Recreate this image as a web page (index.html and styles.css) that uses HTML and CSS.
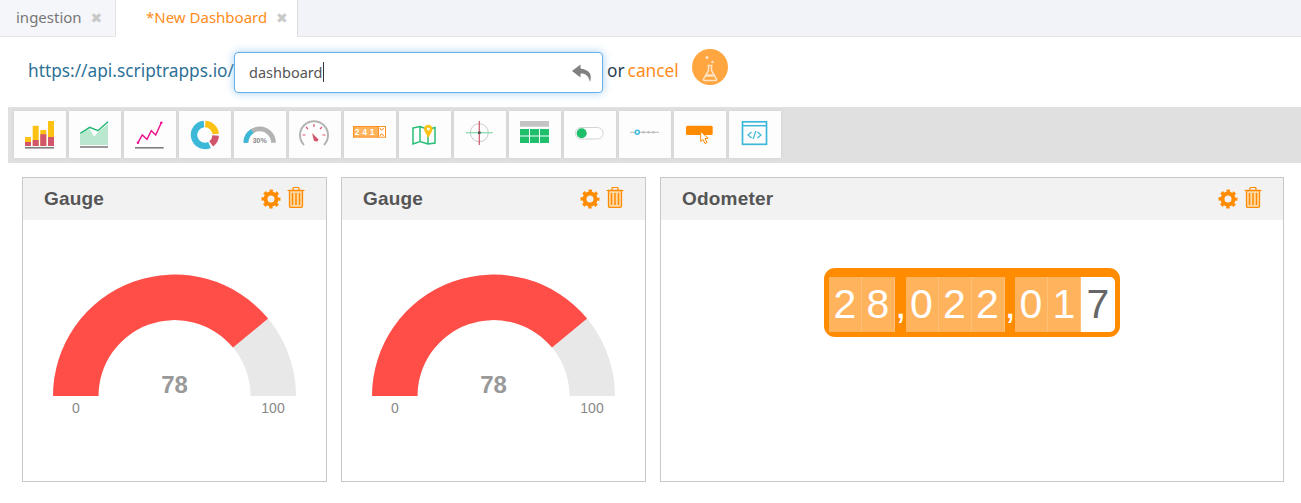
FILE: index.html
```html
<!DOCTYPE html>
<html lang="en">

<head>
  <meta charset="UTF-8">
  <title>New Dashboard</title>
  <link rel="stylesheet" href="styles.css">
</head>

<body>

  <!-- shared card icons -->
  <svg class="sprite">
    <symbol id="cog" viewBox="0 0 20 20">
      <circle cx="10" cy="10" r="5.5" fill="none" stroke="#ff8c00" stroke-width="4" />
      <circle cx="10" cy="10" r="8" fill="none" stroke="#ff8c00" stroke-width="3" stroke-dasharray="3.3 2.98" stroke-dashoffset="1.65" />
    </symbol>
    <symbol id="trash" viewBox="0 0 18 21">
      <path d="M0.5 3.5h17M6 3V1.5q0-1 1-1h4q1 0 1 1V3" fill="none" stroke="#ff8c00" stroke-width="1.2" />
      <path d="M2.5 3.5h13v15.5q0 1.3-1.3 1.3H3.800q-1.300 0-1.300-1.300z" fill="#ffd9a8" stroke="#ff8c00" stroke-width="1.300" />
      <path d="M5.500 6v12M9 6v12M12.500 6v12" stroke="#ff8c00" stroke-width="1.500" />
    </symbol>
    <symbol id="gauge" viewBox="0 0 303 262">
      <path d="M30 176a121.500 121.500 0 0 1 243 0h-45.500a76 76 0 0 0-152 0z" fill="#e8e8e8" />
      <path d="M30 176a121.500 121.500 0 0 1 215.100-77.400l-35.100 29a76 76 0 0 0-134.500 48.400z" fill="#ff4d47" />
    </symbol>
  </svg>

  <nav class="tabs">
    <div class="tab tab-first">ingestion <span class="close">✖</span></div>
    <div class="tab tab-active">*New Dashboard <span class="close">✖</span></div>
  </nav>

  <div class="url-row">
    <span class="url-base">https://api.scriptrapps.io/</span>
    <div class="url-input">
      <span class="url-value">dashboard</span>
      <svg class="undo" width="20" height="18" viewBox="0 0 20 18">
        <path d="M8.500 0.500L0 7l8.500 6.500V9.500c4.500 0 8 1.500 9.500 8.500 2-6 1-12-9.500-13.500z" fill="#808080" />
      </svg>
    </div>
    <span class="or">or</span>
    <a class="cancel">cancel</a>
    <div class="flask">
      <svg width="36" height="36" viewBox="0 0 36 36" fill="none" stroke="#ffe3c2" stroke-width="1.500">
        <path d="M15.500 16.500h5M16.500 16.500v5L11.500 30q-0.500 1.500 1 1.500h11q1.500 0 1-1.500l-5-8.500v-5" />
        <path d="M13.500 26.500h9" stroke-width="2.500" />
        <circle cx="15" cy="8.500" r="1.500" fill="#ffe3c2" stroke="none" />
        <circle cx="20.500" cy="13" r="1.300" fill="#ffe3c2" stroke="none" />
      </svg>
    </div>
  </div>

  <div class="toolbar">
    <button class="tool">
      <svg viewBox="0 0 52 47">
        <path d="M11 26h6v9h-6zM18.700 14.700h6V35h-6zM26.300 19h6v16h-6zM34 10h6v25h-6z" fill="#fdc314" />
        <path d="M11 31h6v4h-6zM18.700 29h6v6h-6zM26.300 23.300h6V35h-6zM34 26h6v9h-6z" fill="#d1566b" />
        <path d="M11 36.800h29" stroke="#777" stroke-width="1.500" />
      </svg>
    </button>
    <button class="tool">
      <svg viewBox="0 0 52 47">
        <path d="M11 23.300L20.700 18l4.300 7.700 4-4.400L39 13v21H11z" fill="#b9e8cf" />
        <path d="M11.300 22.300l9.400-6 8.300 3.400 10-9" fill="none" stroke="#22b573" stroke-width="1.500" />
        <path d="M11 36h28" stroke="#777" stroke-width="1.500" />
      </svg>
    </button>
    <button class="tool">
      <svg viewBox="0 0 52 47">
        <path d="M14 31.700L18.300 24l4.700 4.300 4.300-8.600 4.400 4.300 5.600-12.300" fill="none" stroke="#ec148e" stroke-width="1.500" />
        <circle cx="14" cy="31.700" r="1.300" fill="#ec148e" />
        <circle cx="37.300" cy="11.700" r="1.300" fill="#ec148e" />
        <path d="M11 36.800h28.700" stroke="#777" stroke-width="1.500" />
      </svg>
    </button>
    <button class="tool">
      <svg viewBox="0 0 52 47" fill="none" stroke-width="6.500">
        <path d="M26.200 13a11 11 0 0 1 10.500 10" stroke="#fdc314" />
        <path d="M36.700 24.500a11 11 0 0 1-4.500 8.300" stroke="#d1566b" />
        <path d="M30.500 34a11 11 0 1 1-5.500-21" stroke="#3cb8d9" />
      </svg>
    </button>
    <button class="tool">
      <svg viewBox="0 0 52 47">
        <path d="M9.500 31.700a16.200 16.200 0 0 1 32.400 0h-4.800a11.400 11.400 0 0 0-22.800 0z" fill="#b3b3b3" />
        <path d="M9.500 31.700a16.200 16.200 0 0 1 7.300-13.500l2.700 4a11.400 11.400 0 0 0-5.200 9.500z" fill="#3cb8d9" />
        <text x="25.700" y="32" class="tool-small">30%</text>
      </svg>
    </button>
    <button class="tool">
      <svg viewBox="0 0 52 47" fill="none">
        <path d="M15 34a14 14 0 1 1 20 0" stroke="#b3b3b3" stroke-width="2" />
        <path d="M25 13v3M17 16l2 2M33 16l-2 2M13.500 24h3M33.500 24h3" stroke="#e0566f" stroke-width="1.200" />
        <path d="M23 22l6.500 6.500-1 2-3.500-.5z" fill="#d1566b" />
      </svg>
    </button>
    <button class="tool">
      <svg viewBox="0 0 52 47">
        <rect x="9" y="15" width="33" height="11.700" fill="#ff9020" />
        <rect x="10" y="16" width="24" height="9.700" fill="#ffb35c" />
        <rect x="35" y="16" width="6" height="9.700" fill="#fff" />
        <text x="10.800" y="24" class="tool-digits">241</text>
        <path d="M36 17l1 2h1.500l1-2M36 25l1-2h1.500l1 2" fill="none" stroke="#ff9020" stroke-width="1" />
      </svg>
    </button>
    <button class="tool">
      <svg viewBox="0 0 52 47">
        <path d="M14 17l7-1.500 8 3 7-2V32l-7 1-8-2.500-7 2.500zM21 15.500v15M29 18.500V33" fill="none" stroke="#26bf78" stroke-width="1.500" />
        <path d="M29.300 27l-3.800-7a4.300 4.300 0 1 1 7.600 0z" fill="#fdc314" />
        <circle cx="29.300" cy="18" r="1.500" fill="#fff" />
      </svg>
    </button>
    <button class="tool">
      <svg viewBox="0 0 52 47" fill="none">
        <circle cx="25.300" cy="21.700" r="9" stroke="#ccc" stroke-width="1" />
        <path d="M12 21.700h26.700" stroke="#7fd9a8" stroke-width="1.200" />
        <path d="M25.300 10v24" stroke="#d1566b" stroke-width="1.200" />
        <rect x="24" y="20.400" width="2.600" height="2.600" fill="#555" />
      </svg>
    </button>
    <button class="tool">
      <svg viewBox="0 0 52 47">
        <rect x="11" y="10" width="29" height="5.700" fill="#c4c4c4" />
        <path d="M11 18h9v6.500h-9zM21 18h9v6.500h-9zM31 18h9v6.500h-9zM11 25.500h9V32h-9zM21 25.500h9V32h-9zM31 25.500h9V32h-9z" fill="#1fbf6c" />
      </svg>
    </button>
    <button class="tool">
      <svg viewBox="0 0 52 47">
        <rect x="11.500" y="16.500" width="27.500" height="11.500" rx="5.700" fill="#fff" stroke="#d4d4d4" />
        <circle cx="17.700" cy="22.300" r="5" fill="#1fbf6c" />
      </svg>
    </button>
    <button class="tool">
      <svg viewBox="0 0 52 47">
        <path d="M11 21.300h29" stroke="#bbb" stroke-width="1" />
        <circle cx="24.500" cy="21.300" r="1.300" fill="#bbb" />
        <circle cx="29.500" cy="21.300" r="1.300" fill="#bbb" />
        <circle cx="34.500" cy="21.300" r="1.300" fill="#bbb" />
        <circle cx="18.300" cy="21.300" r="2" fill="#fff" stroke="#3cb8d9" stroke-width="1.500" />
      </svg>
    </button>
    <button class="tool">
      <svg viewBox="0 0 52 47">
        <rect x="12" y="14.700" width="26.700" height="9.300" rx="1.500" fill="#ff8c00" />
        <path d="M26.700 20.500v10l2.300-2 2 4 2-1-2-3.800 3.200-.4z" fill="#fff" stroke="#ff8c00" stroke-width="1" />
      </svg>
    </button>
    <button class="tool">
      <svg viewBox="0 0 52 47" fill="none" stroke="#3cb8d9">
        <rect x="13.500" y="10.800" width="24" height="22.500" stroke-width="1.700" />
        <path d="M13.500 14.700h24" stroke-width="1.500" />
        <path d="M22.500 21l-3.500 3 3.500 3M28.500 21l3.500 3-3.500 3M27 20l-3 8" stroke-width="1.200" />
      </svg>
    </button>
  </div>

  <main class="cards">
    <section class="card">
      <header class="card-head">
        <h2>Gauge</h2>
        <div class="card-actions">
          <svg class="cog"><use href="#cog" /></svg>
          <svg class="trash"><use href="#trash" /></svg>
        </div>
      </header>
      <svg class="gauge" viewBox="0 0 303 262">
        <use href="#gauge" />
        <text x="151.500" y="173" class="gauge-value">78</text>
        <text x="53" y="193" class="gauge-label">0</text>
        <text x="250" y="193" class="gauge-label">100</text>
      </svg>
    </section>

    <section class="card">
      <header class="card-head">
        <h2>Gauge</h2>
        <div class="card-actions">
          <svg class="cog"><use href="#cog" /></svg>
          <svg class="trash"><use href="#trash" /></svg>
        </div>
      </header>
      <svg class="gauge" viewBox="0 0 303 262">
        <use href="#gauge" />
        <text x="151.500" y="173" class="gauge-value">78</text>
        <text x="53" y="193" class="gauge-label">0</text>
        <text x="250" y="193" class="gauge-label">100</text>
      </svg>
    </section>

    <section class="card">
      <header class="card-head">
        <h2>Odometer</h2>
        <div class="card-actions">
          <svg class="cog"><use href="#cog" /></svg>
          <svg class="trash"><use href="#trash" /></svg>
        </div>
      </header>
      <div class="odometer-wrap">
        <div class="odometer">
          <span class="digit">2</span>
          <span class="digit">8</span>
          <span class="comma">,</span>
          <span class="digit">0</span>
          <span class="digit">2</span>
          <span class="digit">2</span>
          <span class="comma">,</span>
          <span class="digit">0</span>
          <span class="digit">1</span>
          <span class="digit digit-last">7</span>
        </div>
      </div>
    </section>
  </main>

</body>

</html>
```

FILE: styles.css
```css
* {
  box-sizing: border-box;
}

body {
  background-color: #fff;
  margin: 0;
  font-family: 'Noto Sans', sans-serif;
  overflow: hidden;
}

.sprite {
  display: none;
}

/* tabs */
.tabs {
  display: flex;
  height: 37px;
  background-color: #f1f3f8;
  border-bottom: 1px solid #e6e6e6;
}

.tab {
  font-size: 15px;
  line-height: 34px;
  white-space: nowrap;
}

.tab-first {
  width: 116px;
  padding-left: 16px;
  color: #777;
  background-color: #f5f6fa;
  border-right: 1px solid #e2e2e2;
}

.tab-active {
  width: 182px;
  height: 37px;
  padding-left: 30px;
  color: #ff8c1a;
  background-color: #fff;
  border-right: 1px solid #ddd;
}

.close {
  margin-left: 5px;
  font-family: 'DejaVu Sans', sans-serif;
  font-size: 14px;
  color: #c8c8c8;
}

/* url row */
.url-row {
  display: flex;
  align-items: center;
  height: 70px;
  padding: 1px 0 0 28px;
  font-size: 17.300px;
}

.url-base {
  width: 206px;
  margin-bottom: 4px;
  color: #2d7196;
  white-space: nowrap;
}

.url-input {
  display: flex;
  align-items: center;
  justify-content: space-between;
  width: 369px;
  height: 41px;
  padding: 0 10px 0 14px;
  background-color: #fff;
  border: 1px solid #66afe9;
  border-radius: 4px;
  box-shadow: 0 0 8px rgba(102, 175, 233, 0.6);
}

.url-value {
  margin-bottom: 1px;
  padding-right: 1px;
  font-size: 14.500px;
  color: #555;
  border-right: 1px solid #333;
}

.or {
  margin: 0 0 4px 4px;
  color: #2c3e50;
}

.cancel {
  margin: 0 0 4px 3px;
  color: #ff8c1a;
}

.flask {
  width: 36px;
  height: 36px;
  margin: 0 0 11px 13px;
  background-color: #ffa640;
  border-radius: 50%;
}

/* widget toolbar */
.toolbar {
  display: flex;
  gap: 3px;
  height: 56px;
  margin-left: 8px;
  padding: 4px 5.500px;
  background-color: #e0e0e0;
}

.tool {
  width: 52px;
  height: 47px;
  padding: 0;
  background-color: #fdfdfd;
  border: none;
  box-shadow: 0 0 3px #ccc;
}

.tool svg {
  display: block;
  width: 52px;
  height: 47px;
}

.tool-small {
  font-family: 'Liberation Sans', sans-serif;
  font-size: 7px;
  font-weight: bold;
  text-anchor: middle;
  fill: #888;
}

.tool-digits {
  font-family: 'Liberation Sans', sans-serif;
  font-size: 8.500px;
  font-weight: bold;
  letter-spacing: 2.700px;
  fill: #fff;
}

/* cards */
.cards {
  display: grid;
  grid-template-columns: 305px 305px 624px;
  gap: 14px;
  margin: 14px 0 0 22px;
}

.card {
  height: 305px;
  background-color: #fff;
  border: 1px solid #c8c8c8;
}

.card-head {
  display: flex;
  align-items: center;
  justify-content: space-between;
  height: 42px;
  padding: 0 21px 1px;
  background-color: #f2f2f2;
}

.card-head h2 {
  margin: 0;
  font-family: 'Liberation Sans', sans-serif;
  font-size: 19px;
  letter-spacing: 0.200px;
  color: #555;
}

.card-actions {
  display: flex;
  align-items: center;
  gap: 6px;
}

.cog {
  width: 20px;
  height: 20px;
}

.trash {
  width: 18px;
  height: 21px;
  margin-bottom: 3px;
}

/* gauge */
.gauge {
  display: block;
  width: 303px;
  height: 262px;
}

.gauge-value {
  font-family: 'Liberation Sans', sans-serif;
  font-size: 24px;
  font-weight: bold;
  text-anchor: middle;
  fill: #999;
}

.gauge-label {
  font-family: 'Liberation Sans', sans-serif;
  font-size: 14px;
  text-anchor: middle;
  fill: #888;
}

/* odometer */
.odometer-wrap {
  display: flex;
  justify-content: center;
  padding-top: 48px;
}

.odometer {
  display: flex;
  height: 69px;
  padding-top: 4px;
  background-color: #ff8c00;
  border: 5px solid #ff8c00;
  border-radius: 11px;
  font-family: 'Liberation Sans', sans-serif;
  font-size: 41px;
  line-height: 55px;
  color: #fff;
}

.digit {
  width: 33px;
  text-align: center;
  background-color: #ffb35c;
  border-right: 1px solid #ffc078;
}

.comma {
  width: 10.500px;
}

.digit-last {
  width: 34px;
  color: #666;
  background-color: #fff;
  border-right: none;
  border-radius: 0 5px 5px 0;
}
```
